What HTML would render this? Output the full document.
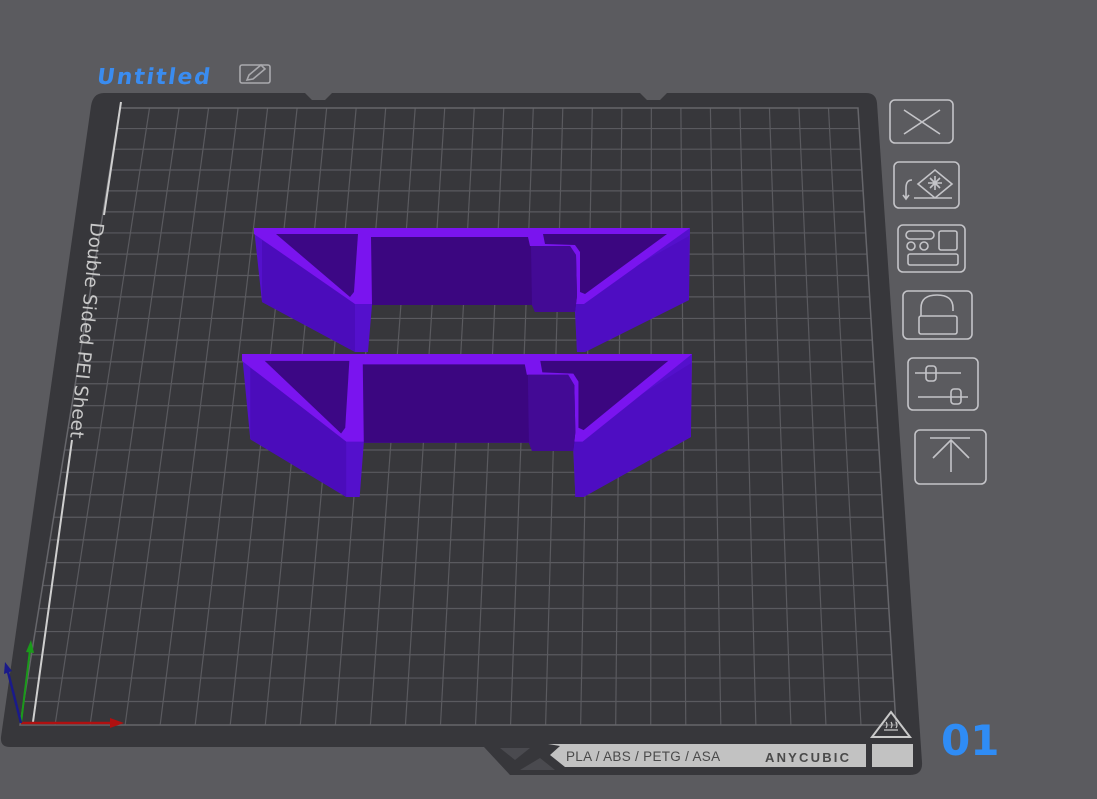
<!DOCTYPE html>
<html><head><meta charset="utf-8"><style>
html,body{margin:0;padding:0;background:#5b5b5f;width:1097px;height:799px;overflow:hidden}
svg{position:absolute;left:0;top:0}
</style></head><body>
<svg id="s" width="1097" height="799" viewBox="0 0 1097 799" xmlns="http://www.w3.org/2000/svg">
<rect width="1097" height="799" fill="#5b5b5f"/>
<path d="M104,93 L305,93 L312,100 L325,100 L332,93 L640,93 L647,100 L660,100 L667,93 L866,93 Q876,93 877,103 L922,762 Q923,775 910,775 L510,775 L484,747 L10,747 Q0,747 1,737 L91,106 Q93,93 104,93 Z" fill="#37373b"/>
<g id="grid" stroke="#5a5a5f" stroke-width="1.2" fill="none"></g>
<path d="M120,108 L858,108 L896,725 L20,725 Z" fill="none" stroke="#66666b" stroke-width="1.5"/>
<path d="M500,748 L530,748 L515,760 Z" fill="#4a4a4f"/>
<path d="M520,770 L555,770 L540,758 Z" fill="#4a4a4f"/>
<path d="M548,744 L866,744 L866,767 L565,767 L550,755 L560,746 Z" fill="#c2c2c2"/>
<rect x="872" y="744" width="41" height="23" fill="#c2c2c2"/>
<text x="566" y="761" font-family="Liberation Sans,sans-serif" font-size="13.5" fill="#4a4a4a" letter-spacing="0.3">PLA / ABS / PETG / ASA</text>
<text x="765" y="762" font-family="Liberation Sans,sans-serif" font-size="13" font-weight="bold" fill="#4a4a4a" letter-spacing="2.2">ANYCUBIC</text>
<path d="M891,712 L910,737 L872,737 Z" fill="none" stroke="#c9c9c9" stroke-width="2"/>
<path d="M884,730 L898,730 M886,728 q2,-3 0,-6 M891,728 q2,-3 0,-6 M896,728 q2,-3 0,-6" stroke="#c9c9c9" stroke-width="1.2" fill="none"/>
<line x1="121" y1="102" x2="104" y2="215" stroke="#cfcfcf" stroke-width="2"/>
<line x1="72" y1="440" x2="33" y2="722" stroke="#cfcfcf" stroke-width="2"/>
<text transform="translate(91,222) rotate(95.5)" font-family="DejaVu Sans,sans-serif" font-size="18.5" fill="#c8c8c8">Double Sided PEI Sheet</text>
<line x1="21" y1="723" x2="112" y2="723" stroke="#b01010" stroke-width="2.5"/>
<path d="M110,718 L124,723 L110,728 Z" fill="#b01010"/>
<line x1="21" y1="723" x2="30" y2="650" stroke="#1a9a1a" stroke-width="2"/>
<path d="M26,652 L31,640 L34,653 Z" fill="#1a9a1a"/>
<line x1="21" y1="723" x2="8" y2="672" stroke="#1a1a8a" stroke-width="2.5"/>
<path d="M4,674 L5,662 L12,671 Z" fill="#1a1a8a"/>
<defs>
<g id="obj">
<path d="M254,228 L690,228 L689,300 L585,352 L577,352 L575,312 L535,312 L532,305 L372,305 L368,352 L355,352 L262,302 Z" fill="#5410cc"/>
<path d="M262,240 L355,300 L355,352 L262,302 Z" fill="#4b0cbb"/>
<path d="M575,300 L689,236 L689,300 L585,352 L577,352 Z" fill="#4e0dc2"/>
<path d="M254,228 L690,228 L584,304 L574,304 L355,304 L254,234 Z" fill="#7a14ef"/>
<path d="M276,234 L358,234 L354,292 L350,297 Z" fill="#3c0785"/>
<path d="M371,237 L528,237 L530,246 L570,246 L576,255 L577,296 L575,312 L535,312 L532,305 L372,305 Z" fill="#3b0680"/>
<path d="M531,246 L570,246 L576,255 L577,296 L575,312 L535,312 L532,305 Z" fill="#430a95"/>
<path d="M543,234 L667,234 L585,294 L580,292 L580,252 L575,245 L545,244 Z" fill="#3b0680"/>
</g>
</defs>
<use href="#obj"/>
<use href="#obj" transform="matrix(1.032,0,0,1.153,-20.1,91.1)"/>
<g fill="none" stroke="#c4c4c8" stroke-width="1.6">
<rect x="890" y="100" width="63" height="43" rx="5"/>
<path d="M904,110 L940,134 M940,110 L904,134"/>
<rect x="894" y="162" width="65" height="46" rx="5"/>
<path d="M918,184 L935,170 L952,184 L935,198 Z M935,176 v14 M928,183 h14 M930,178 l10,10 M940,178 l-10,10 M914,198 h38 M912,180 q-6,0 -6,8 v10 M903,195 l3,4 3,-4"/>
<rect x="898" y="225" width="67" height="47" rx="5"/>
<rect x="906" y="231" width="28" height="8" rx="4"/><circle cx="911" cy="246" r="4"/><circle cx="924" cy="246" r="4"/><rect x="939" y="231" width="18" height="19" rx="2"/><rect x="908" y="254" width="50" height="11" rx="2"/>
<rect x="903" y="291" width="69" height="48" rx="5"/>
<rect x="919" y="316" width="38" height="18" rx="2"/><path d="M921,316 v-8 q0,-13 16,-13 q16,0 16,13 v3"/>
<rect x="908" y="358" width="70" height="52" rx="5"/>
<path d="M915,373 h46 M918,397 h50"/><rect x="926" y="366" width="10" height="15" rx="3"/><rect x="951" y="389" width="10" height="15" rx="3"/>
<rect x="915" y="430" width="71" height="54" rx="5"/>
<path d="M930,438 h40 M951,472 V440 M933,458 L951,440 L969,458"/>
</g>
<text x="100" y="84" font-family="DejaVu Sans,sans-serif" font-size="22" font-weight="bold" fill="#3a8cf0" letter-spacing="1.8" transform="translate(8,0) skewX(-8)">Untitled</text>
<g fill="none" stroke="#a9a9ad" stroke-width="1.6"><rect x="240" y="65" width="30" height="18" rx="2"/><path d="M247,80 l2,-5 12,-10 4,4 -12,10 Z"/></g>
<text x="941" y="755" font-family="DejaVu Sans,sans-serif" font-size="42" font-weight="bold" fill="#2f8cf5">01</text>
</svg>
<script>
var g=document.getElementById('grid'),h='';
var C=25,R=28;
for(var i=1;i<C;i++){var t=i/C;var x1=120+738*t,x2=20+876*t;h+='<line x1="'+x1+'" y1="108" x2="'+x2+'" y2="725"/>';}
for(var j=1;j<R;j++){var u=j/R;u=u*0.93+u*u*0.07;var y=108+617*u;var xl=120-100*u,xr=858+38*u;h+='<line x1="'+xl+'" y1="'+y+'" x2="'+xr+'" y2="'+y+'"/>';}
g.innerHTML=h;
</script>
</body></html>
